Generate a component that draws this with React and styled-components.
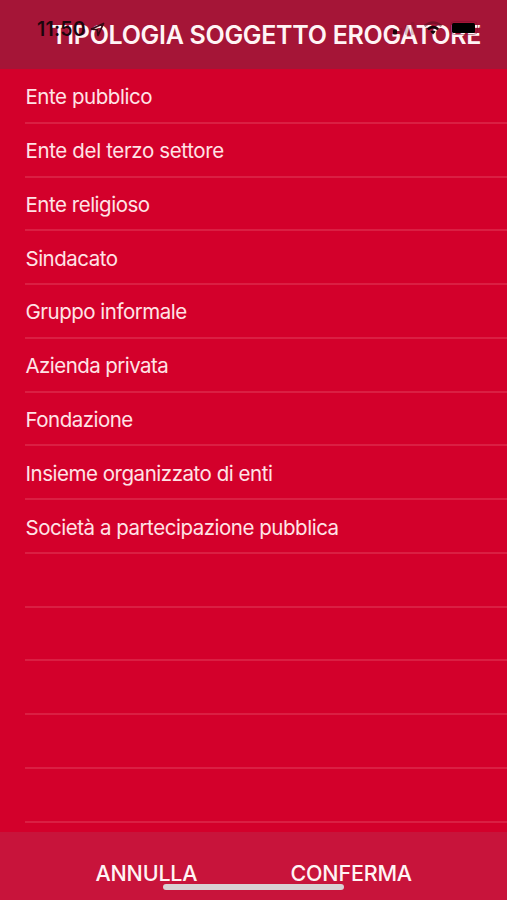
import React from 'react';
import styled, { createGlobalStyle } from 'styled-components';

const options = [
  { label: 'Ente pubblico', tracking: -0.45 },
  { label: 'Ente del terzo settore', tracking: -0.36 },
  { label: 'Ente religioso', tracking: -0.48 },
  { label: 'Sindacato', tracking: -0.5 },
  { label: 'Gruppo informale', tracking: -0.49 },
  { label: 'Azienda privata', tracking: -0.56 },
  { label: 'Fondazione', tracking: -0.52 },
  { label: 'Insieme organizzato di enti', tracking: -0.47 },
  { label: 'Società a partecipazione pubblica', tracking: -0.47 },
];
const emptyRows = ['e1', 'e2', 'e3', 'e4', 'e5'];

const StatusBar = () => (
  <Status>
    <Clock>
      <Time>11:50</Time>
      <svg width='15' height='15' viewBox='0 0 15 15'>
        <path
          d='M13.5 1.5 L1.5 7 L7.3 7.7 L8 13.5 Z'
          fill='none'
          stroke='#3a0915'
          strokeWidth='1.8'
          strokeLinejoin='round'
        />
      </svg>
    </Clock>
    <Indicators>
      <svg width='23' height='14' viewBox='0 0 23 14'>
        <rect x='0' y='8.5' width='4' height='5' rx='1' fill='#16040a' />
        <g fill='#5a0d22' opacity='0.22'>
          <rect x='6' y='7' width='3.5' height='7' rx='1' />
          <rect x='12' y='4' width='3.5' height='10' rx='1' />
          <rect x='18' y='1' width='3.5' height='13' rx='1' />
        </g>
      </svg>
      <svg width='20' height='14' viewBox='0 0 20 14'>
        <path
          d='M1.5 5 Q10 -2 18.5 5'
          fill='none'
          stroke='#5c0d22'
          strokeWidth='2.4'
          opacity='0.6'
        />
        <path
          d='M4.8 8.3 Q10 4 15.2 8.3'
          fill='none'
          stroke='#16040a'
          strokeWidth='2.6'
        />
        <path d='M7.3 10.6 Q10 8.6 12.7 10.6 L10 13.4 Z' fill='#16040a' />
      </svg>
      <svg width='31' height='14' viewBox='0 0 31 14'>
        <rect
          x='0.5'
          y='0.5'
          width='27'
          height='13'
          rx='4'
          fill='none'
          stroke='#7d1030'
          opacity='0.5'
        />
        <rect x='2' y='2' width='23' height='10' rx='1.5' fill='#000' />
        <path d='M29 5 Q31 7 29 9 Z' fill='#7d1030' opacity='0.4' />
      </svg>
    </Indicators>
  </Status>
);

const App = () => (
  <Screen>
    <GlobalStyle />
    <Header>
      <Title>TIPOLOGIA SOGGETTO EROGATORE</Title>
      <StatusBar />
    </Header>
    <List>
      {options.map(({ label, tracking }) => (
        <Row key={label} $tracking={tracking}>
          {label}
        </Row>
      ))}
      {emptyRows.map(id => (
        <Row key={id} />
      ))}
    </List>
    <Footer>
      <Action $width={102}>ANNULLA</Action>
      <Action $width={122}>CONFERMA</Action>
      <HomeIndicator />
    </Footer>
  </Screen>
);
export default App;

const GlobalStyle = createGlobalStyle`
  * {
    box-sizing: border-box;
  }
  body {
    margin: 0;
    background: #d3002b;
    font-family: Inter, 'Liberation Sans', sans-serif;
  }
`;
const Screen = styled.div`
  display: flex;
  flex-direction: column;
  width: 507px;
  height: 900px;
  overflow: hidden;
  background: #d3002b;
`;
const Header = styled.header`
  position: relative;
  display: flex;
  justify-content: flex-end;
  flex: none;
  height: 69px;
  padding: 20px 26px 0 0;
  background: #a51537;
`;
const Title = styled.h1`
  margin: 0;
  color: #fff4f5;
  font-size: 25px;
  font-weight: 600;
  line-height: 31px;
  letter-spacing: -0.3px;
  white-space: nowrap;
`;
const Status = styled.div`
  position: absolute;
  top: 19px;
  left: 37px;
  right: 26px;
  display: flex;
  justify-content: space-between;
`;
const Clock = styled.div`
  display: flex;
  align-items: center;
  gap: 4px;
  height: 20px;
`;
const Time = styled.span`
  color: #1c050c;
  font-size: 19.5px;
  font-weight: 600;
  line-height: 20px;
  letter-spacing: 0.2px;
`;
const Indicators = styled.div`
  display: flex;
  align-items: center;
  gap: 7px;
  height: 18px;
`;
const List = styled.ul`
  flex: 1;
  margin: 0;
  padding: 1px 0 0 25px;
  list-style: none;
`;
const Row = styled.li`
  display: flex;
  align-items: center;
  height: 53.77px;
  padding: 2px 0 0 0.5px;
  border-bottom: 2px solid #da1f43;
  color: #ffe3e6;
  font-size: 20.5px;
  letter-spacing: ${({ $tracking = 0 }) => $tracking}px;
  white-space: nowrap;
`;
const Footer = styled.footer`
  position: relative;
  display: flex;
  flex: none;
  gap: 93px;
  height: 68px;
  padding: 26px 0 0 95.5px;
  background: #c8143b;
`;
const Action = styled.button`
  width: ${({ $width }) => $width}px;
  height: 30px;
  padding: 0;
  border: 0;
  background: none;
  color: #fff4f5;
  font-family: inherit;
  font-size: 21.5px;
  font-weight: 500;
  line-height: 30px;
  letter-spacing: -0.2px;
  text-align: left;
  white-space: nowrap;
`;
const HomeIndicator = styled.div`
  position: absolute;
  top: 52px;
  left: 163px;
  width: 181px;
  height: 6px;
  border-radius: 3px;
  background: #d9d0d3;
`;
